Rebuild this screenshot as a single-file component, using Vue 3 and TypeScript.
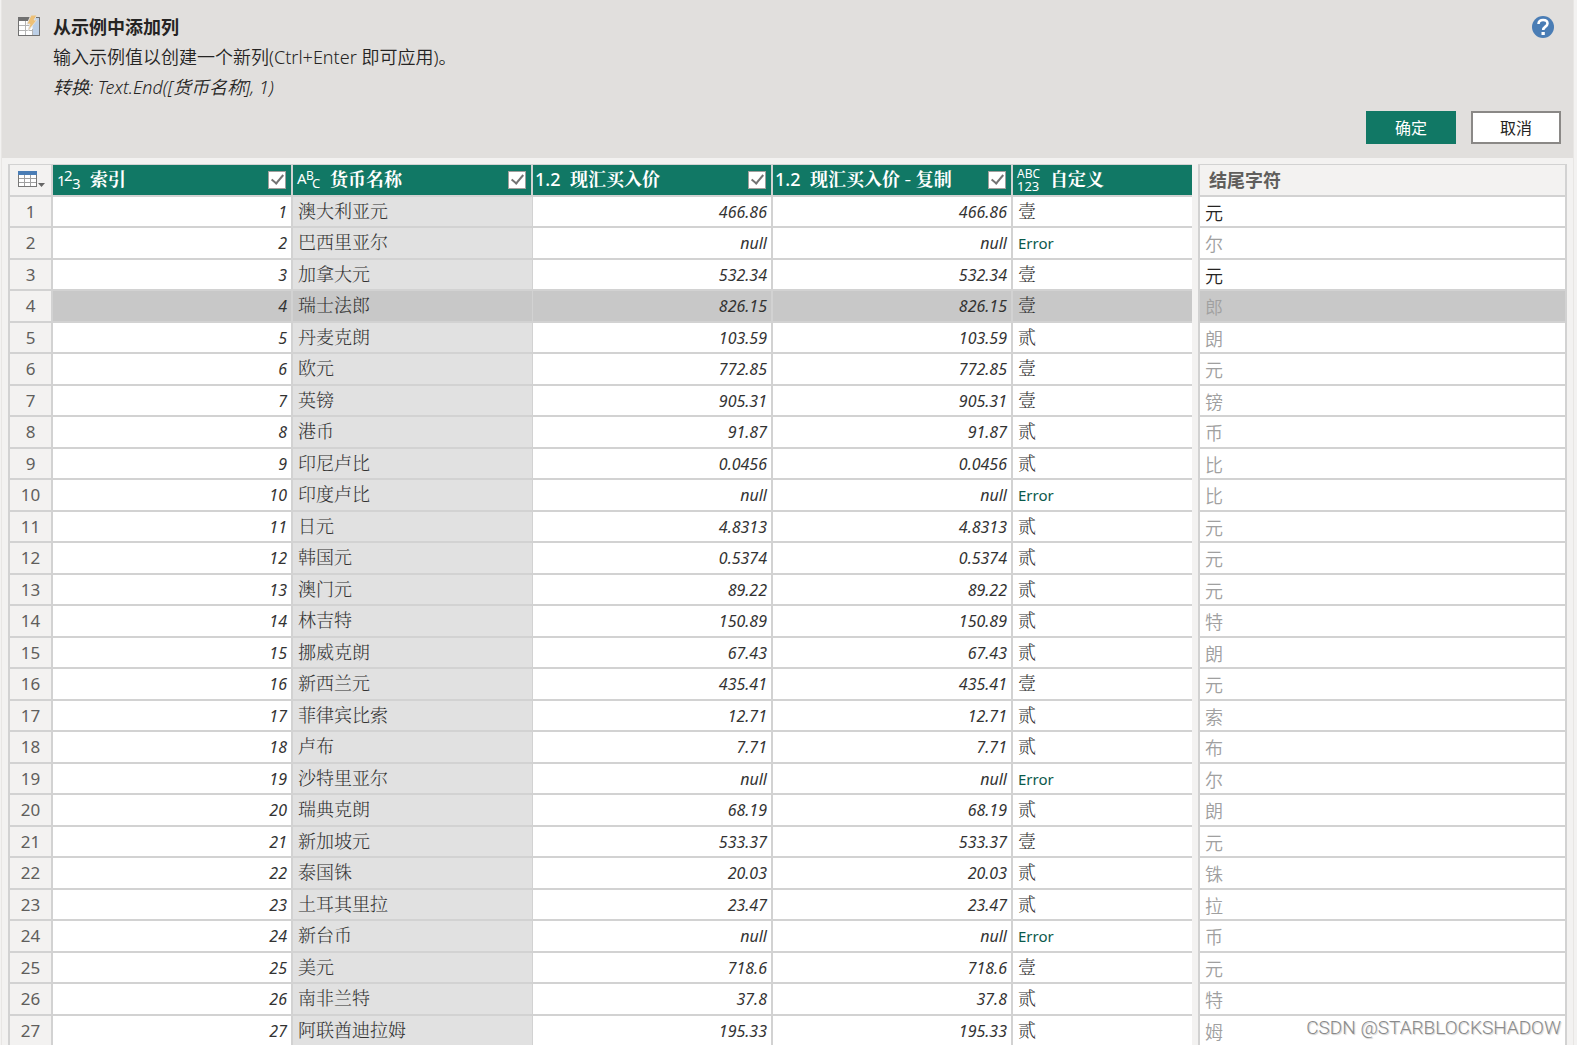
<script setup lang="ts">
import { ref } from 'vue'

interface Row {
  name: string
  price: string
  custom: string
  sample: string
  given?: boolean
}

const one = '壹'
const two = '贰'
const err = 'Error'

const rows = ref<Row[]>([
  { name: '澳大利亚元', price: '466.86', custom: one, sample: '元', given: true },
  { name: '巴西里亚尔', price: 'null', custom: err, sample: '尔' },
  { name: '加拿大元', price: '532.34', custom: one, sample: '元', given: true },
  { name: '瑞士法郎', price: '826.15', custom: one, sample: '郎' },
  { name: '丹麦克朗', price: '103.59', custom: two, sample: '朗' },
  { name: '欧元', price: '772.85', custom: one, sample: '元' },
  { name: '英镑', price: '905.31', custom: one, sample: '镑' },
  { name: '港币', price: '91.87', custom: two, sample: '币' },
  { name: '印尼卢比', price: '0.0456', custom: two, sample: '比' },
  { name: '印度卢比', price: 'null', custom: err, sample: '比' },
  { name: '日元', price: '4.8313', custom: two, sample: '元' },
  { name: '韩国元', price: '0.5374', custom: two, sample: '元' },
  { name: '澳门元', price: '89.22', custom: two, sample: '元' },
  { name: '林吉特', price: '150.89', custom: two, sample: '特' },
  { name: '挪威克朗', price: '67.43', custom: two, sample: '朗' },
  { name: '新西兰元', price: '435.41', custom: one, sample: '元' },
  { name: '菲律宾比索', price: '12.71', custom: two, sample: '索' },
  { name: '卢布', price: '7.71', custom: two, sample: '布' },
  { name: '沙特里亚尔', price: 'null', custom: err, sample: '尔' },
  { name: '瑞典克朗', price: '68.19', custom: two, sample: '朗' },
  { name: '新加坡元', price: '533.37', custom: one, sample: '元' },
  { name: '泰国铢', price: '20.03', custom: two, sample: '铢' },
  { name: '土耳其里拉', price: '23.47', custom: two, sample: '拉' },
  { name: '新台币', price: 'null', custom: err, sample: '币' },
  { name: '美元', price: '718.6', custom: one, sample: '元' },
  { name: '南非兰特', price: '37.8', custom: two, sample: '特' },
  { name: '阿联酋迪拉姆', price: '195.33', custom: two, sample: '姆' },
])

const columns = ref([
  { label: '索引', type: 'int', checked: true },
  { label: '货币名称', type: 'text', checked: true },
  { label: '现汇买入价', type: 'decimal', checked: true },
  { label: '现汇买入价 - 复制', type: 'decimal', checked: true },
])

const selected = ref(3)
</script>

<template>
  <div class="page">
    <main class="dialog">
      <header class="panel">
        <svg class="logo" width="22" height="22" viewBox="0 0 22 22" aria-hidden="true">
          <rect x="0.5" y="2.5" width="21" height="18" fill="#fff" stroke="#707070" />
          <rect x="0" y="2" width="14" height="4" fill="#707070" />
          <rect x="14.5" y="2.5" width="7" height="18" fill="#bccfe6" />
          <path d="M18 2.500H21.500V20.500H14" fill="none" stroke="#707070" />
          <path d="M1 10.5H14M1 15.5H14M7.5 6V20M14.500 14V20" stroke="#b4b4b4" fill="none" />
          <path d="M13 0H19L16 5H19L10 16L12 9H9Z" fill="#edc077" stroke="#e1dfdd" />
        </svg>
        <div class="intro">
          <h1>从示例中添加列</h1>
          <p>输入示例值以创建一个新列(Ctrl+Enter 即可应用)。</p>
          <p class="formula">转换: Text.End([货币名称], 1)</p>
        </div>
        <div class="side">
          <button class="help" type="button" aria-label="帮助">
            <svg width="22" height="22" viewBox="0 0 22 22">
              <circle cx="11" cy="11" r="11" fill="#4a7db5" />
              <path d="M6.500 8C6.500 5.300 8.300 4 11.100 4C13.800 4 15.500 5.400 15.500 7.600C15.500 10.600 11.200 10.700 11.200 14" fill="none" stroke="#fff" stroke-width="2.600" />
              <rect x="9.500" y="16" width="3.300" height="3" fill="#fff" />
            </svg>
          </button>
          <div class="actions">
            <button class="btn primary" type="button">确定</button>
            <button class="btn" type="button">取消</button>
          </div>
        </div>
      </header>

      <div class="content">
        <table class="grid source">
          <colgroup>
            <col class="c-num" />
            <col v-for="c in columns" :key="c.label" class="c-data" />
            <col />
          </colgroup>
          <thead>
            <tr>
              <th class="corner">
                <button type="button" class="menu" aria-label="表">
                  <svg width="28" height="18" viewBox="0 0 28 18">
                    <rect x="0.5" y="0.5" width="18" height="15" fill="#fff" stroke="#777" />
                    <rect x="0" y="0" width="19" height="4" fill="#4a7db5" />
                    <path d="M1 7.500H18M1 11.500H18M6.500 4V15M12.500 4V15" stroke="#a0a0a0" fill="none" />
                    <path d="M20 12H27L23.500 16Z" fill="#666" />
                  </svg>
                </button>
              </th>
              <th v-for="(c, i) in columns" :key="c.label" class="col-head">
                <div class="head">
                  <svg class="type" width="25" height="30" viewBox="0 0 25 30" aria-hidden="true">
                    <template v-if="c.type === 'int'">
                      <text x="1" y="21" font-size="15">1</text>
                      <text x="8" y="16" font-size="15">2</text>
                      <text x="16" y="24" font-size="15">3</text>
                    </template>
                    <template v-else-if="c.type === 'text'">
                      <text x="1" y="19" font-size="15">A</text>
                      <text x="10" y="15" font-size="12">B</text>
                      <text x="16" y="23" font-size="13">C</text>
                    </template>
                    <text v-else x="-1" y="21" font-size="18" font-weight="500">1.2</text>
                  </svg>
                  <label :for="'col' + i">{{ c.label }}</label>
                  <input :id="'col' + i" v-model="c.checked" type="checkbox" />
                </div>
              </th>
              <th class="col-head last">
                <div class="head">
                  <svg class="type" width="25" height="30" viewBox="0 0 25 30" aria-hidden="true">
                    <text x="1" y="13" font-size="12">ABC</text>
                    <text x="1" y="26" font-size="13">123</text>
                  </svg>
                  <span class="label">自定义</span>
                </div>
              </th>
            </tr>
          </thead>
          <tbody>
            <tr v-for="(r, i) in rows" :key="i" :class="{ selected: i === selected }" @click="selected = i">
              <th scope="row">{{ i + 1 }}</th>
              <td class="number">{{ i + 1 }}</td>
              <td class="name">{{ r.name }}</td>
              <td class="number">{{ r.price }}</td>
              <td class="number">{{ r.price }}</td>
              <td class="last" :class="{ error: r.custom === 'Error' }">
                <a v-if="r.custom === 'Error'" href="#">Error</a>
                <template v-else>{{ r.custom }}</template>
              </td>
            </tr>
          </tbody>
        </table>

        <table class="grid samples">
          <thead>
            <tr>
              <th><div class="head">结尾字符</div></th>
            </tr>
          </thead>
          <tbody>
            <tr v-for="(r, i) in rows" :key="i" :class="{ selected: i === selected }">
              <td>
                <input v-model="r.sample" type="text" :class="{ given: r.given }" :aria-label="'示例 ' + (i + 1)" />
              </td>
            </tr>
          </tbody>
        </table>
      </div>
    </main>
    <div class="watermark">CSDN @STARBLOCKSHADOW</div>
  </div>
</template>

<style>
body {
  margin: 0;
  background: #f3f2f1;
}
</style>

<style scoped>
.page {
  --sans: "Noto Sans", "Noto Sans CJK SC", sans-serif;
  --serif: "Noto Serif CJK SC", "Noto Sans CJK SC", serif;
  --line: #d2d2d2;
  position: relative;
  box-sizing: border-box;
  height: 100vh;
  overflow: hidden;
  padding: 0 4px 0 2px;
  font-family: var(--sans);
  font-size: 16px;
  color: #252423;
}

.dialog {
  box-shadow: 0 0 0 1px #e8e6e4;
}

.panel {
  display: flex;
  box-sizing: border-box;
  min-height: 158px;
  padding: 12px 12px 14px 16px;
  background: #e1dfdd;
}

.logo {
  flex: none;
  margin-top: 3px;
}

.intro {
  flex: 1;
  margin-left: 13px;
  font-size: 18px;
  line-height: 30px;
}

h1,
p {
  margin: 0;
  font-size: 18px;
  font-weight: 350;
}

h1 {
  font-weight: 700;
}

.formula {
  font-style: italic;
}

.side {
  display: flex;
  flex-direction: column;
  justify-content: space-between;
  align-items: flex-end;
}

.help,
.menu {
  display: block;
  padding: 0;
  border: 0;
  background: none;
}

.help {
  height: 22px;
  margin: 4px 7px 0 0;
}

.actions {
  display: flex;
  gap: 15px;
}

.btn {
  box-sizing: border-box;
  width: 90px;
  height: 33px;
  padding: 0 0 2px;
  border: 2px solid #8a8886;
  background: #fff;
  color: #252423;
  font-family: var(--sans);
  font-size: 16px;
}

.btn.primary {
  border-color: #117865;
  background: #117865;
  color: #fff;
}

.content {
  display: flex;
  align-items: flex-start;
  gap: 6px;
  padding: 6px 6px 0;
}

.grid {
  table-layout: fixed;
  border-collapse: separate;
  border-spacing: 0;
  border-top: 1px solid var(--line);
  border-left: 2px solid var(--line);
}

.source {
  flex: 1185 1 0;
  width: 0;
}

.samples {
  flex: 368 1 0;
  width: 0;
}

.c-num {
  width: 43px;
}

.c-data {
  width: 240px;
}

th,
td {
  box-sizing: border-box;
  padding: 0;
  border-right: 2px solid var(--line);
  border-bottom: 2px solid var(--line);
  line-height: 28px;
  font-weight: 400;
  text-align: left;
  white-space: nowrap;
  overflow: hidden;
}

thead tr {
  height: 32px;
}

tbody tr {
  height: 31px;
}

tbody tr:nth-child(even) {
  height: 32px;
}

.source .last {
  border-right: 0;
}

.menu {
  margin-left: 8px;
  height: 18px;
}

.col-head {
  background: #117865;
  color: #fff;
}

.head {
  display: flex;
  align-items: center;
  height: 30px;
}

.col-head .head {
  padding: 0 5px 0 3px;
}

.type {
  flex: none;
  margin-right: 9px;
  overflow: visible;
  fill: #fff;
  font-family: var(--sans);
}

label,
.label {
  flex: 1;
  padding-bottom: 4px;
  font-family: var(--serif);
  font-size: 18px;
  font-weight: 700;
}

input[type="checkbox"] {
  appearance: none;
  flex: none;
  width: 18px;
  height: 18px;
  margin: 0;
  border: 1px solid #a19f9d;
  background: #fff;
}

input[type="checkbox"]:checked::after {
  content: "";
  display: block;
  box-sizing: border-box;
  width: 7px;
  height: 12px;
  margin: 0 0 0 5px;
  border: solid #737373;
  border-width: 0 2px 2px 0;
  transform: rotate(40deg);
}

tbody td {
  padding: 0 5px 4px;
  background: #fff;
  font-family: var(--serif);
  font-size: 18px;
  font-weight: 300;
  line-height: 24px;
  color: #333;
}

tbody th {
  font-size: 17px;
  line-height: 26px;
  color: #605e5c;
  text-align: center;
}

tbody .number {
  padding: 0 4px 0 5px;
  font-family: var(--sans);
  font-size: 16px;
  font-style: italic;
  font-weight: 400;
  line-height: 26px;
  text-align: right;
}

tbody .name {
  border-right-width: 1px;
  background: #e1e1e1;
}

tbody .selected td {
  background: #c8c8c8;
}

tbody .error {
  padding-bottom: 0;
  font-family: var(--sans);
  font-size: 15px;
  font-weight: 400;
}

td a {
  color: #0b5a4c;
  text-decoration: none;
}

.samples .head {
  padding-left: 9px;
  font-size: 18px;
  font-weight: 700;
  color: #605e5c;
}

.samples tbody td {
  padding: 0 5px;
}

input[type="text"] {
  display: block;
  box-sizing: border-box;
  width: 100%;
  height: 28px;
  padding: 0;
  border: 0;
  outline: 0;
  background: transparent;
  font-family: var(--sans);
  font-size: 18px;
  font-weight: 350;
  color: #a0a0a0;
}

input.given {
  color: #252423;
}

.watermark {
  position: absolute;
  right: 16px;
  bottom: 4px;
  font-family: Roboto, sans-serif;
  font-size: 19px;
  font-weight: 300;
  line-height: 26px;
  color: #8a8a8a;
  text-shadow: 1px 1px 1px #ccc;
}
</style>
